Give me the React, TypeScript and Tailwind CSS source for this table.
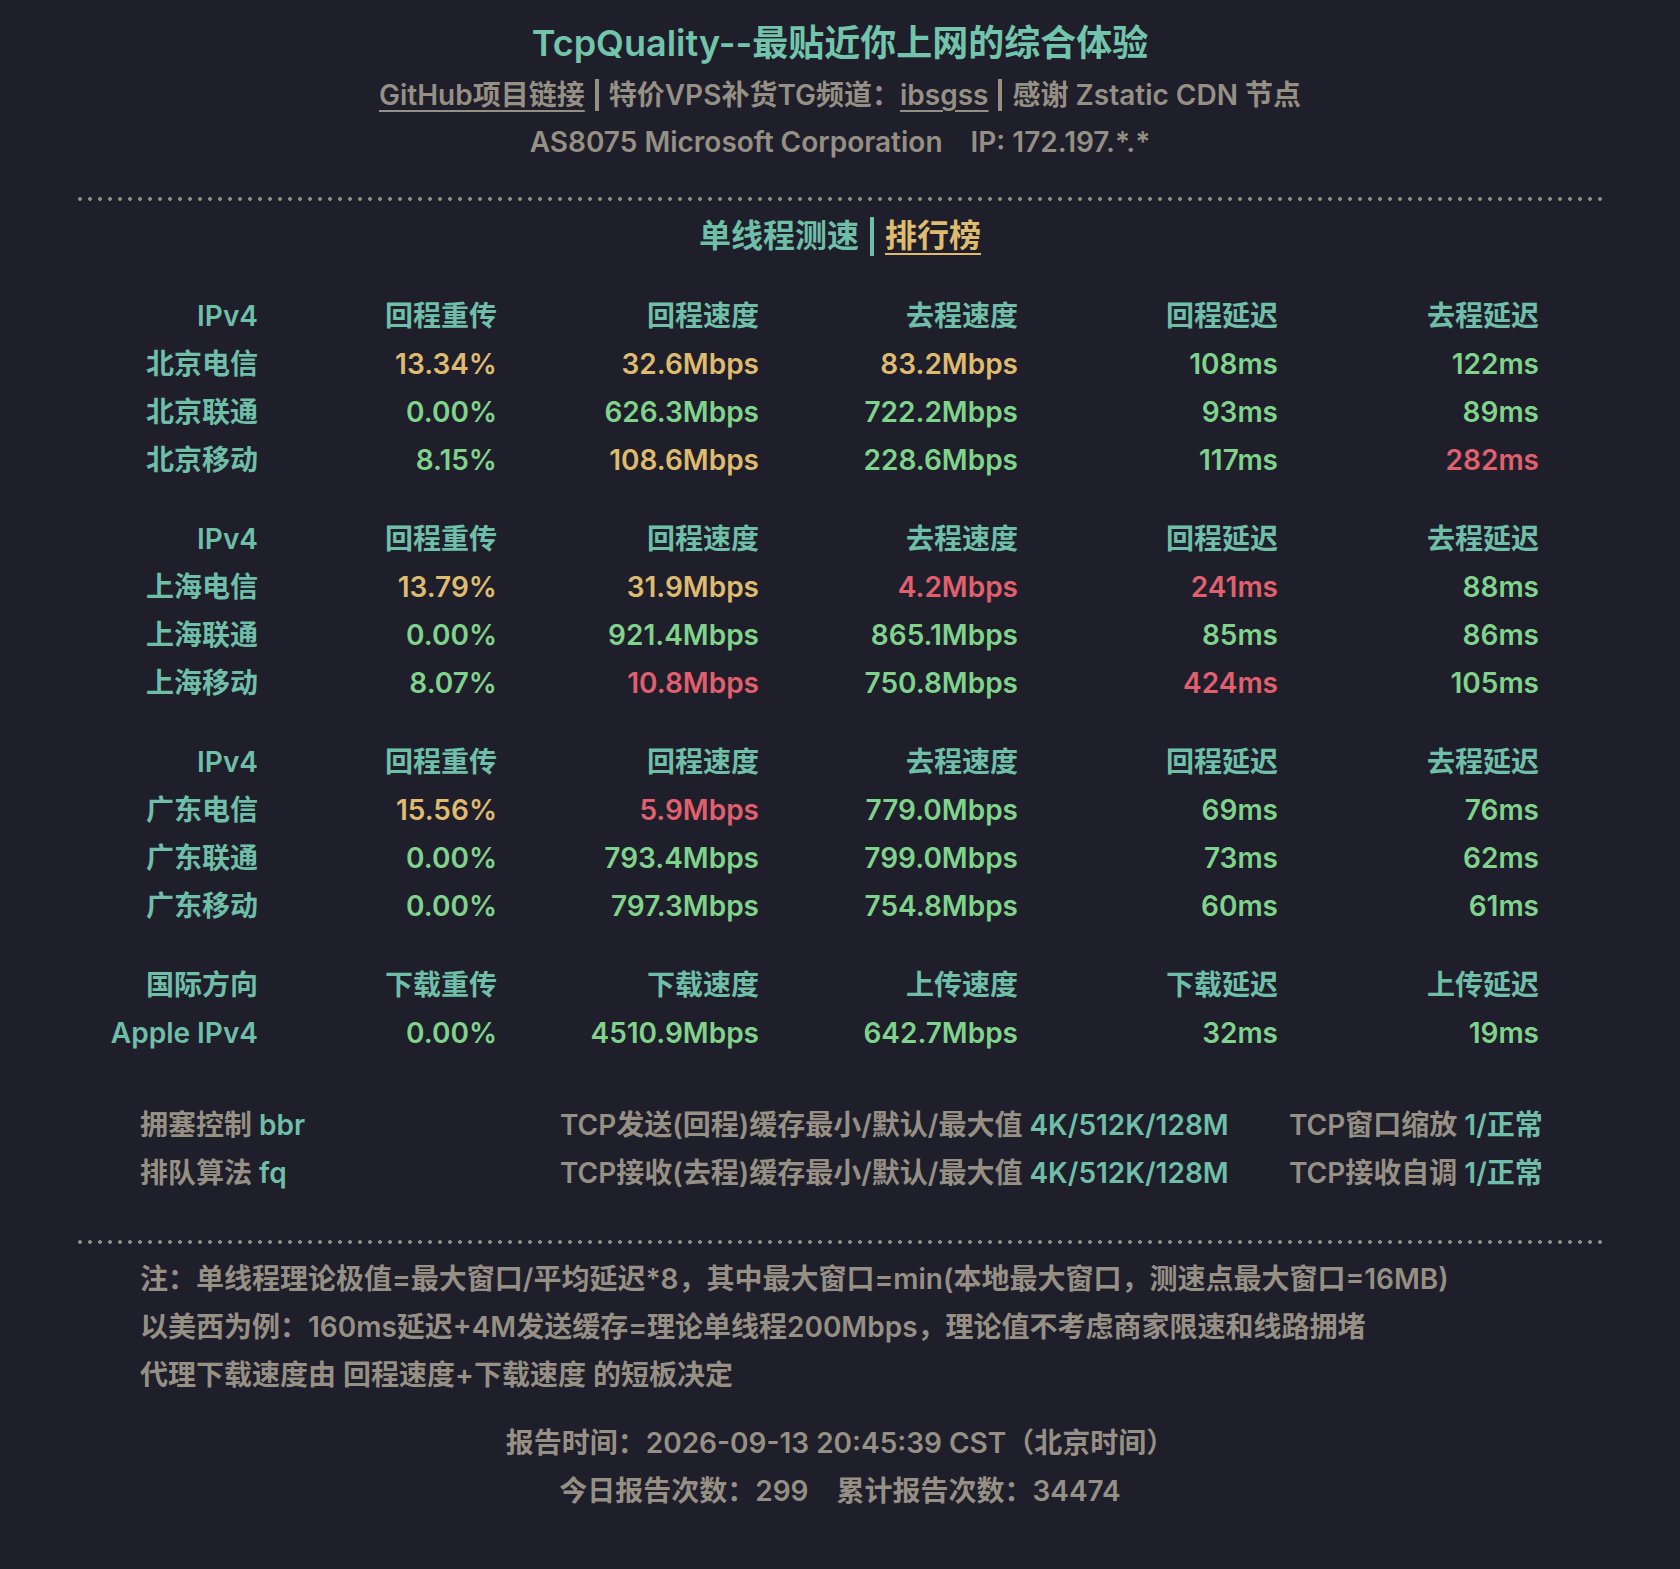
const tone: Record<string, string> = {
  y: "text-[#debb6e]",
  g: "text-[#80d38a]",
  r: "text-[#e0606e]",
};

type Cell = [string, string];
type Group = { head: string[]; rows: [string, ...Cell[]][] };

const groups: Group[] = [
  {
    head: ["IPv4", "回程重传", "回程速度", "去程速度", "回程延迟", "去程延迟"],
    rows: [
      ["北京电信", ["13.34%", "y"], ["32.6Mbps", "y"], ["83.2Mbps", "y"], ["108ms", "g"], ["122ms", "g"]],
      ["北京联通", ["0.00%", "g"], ["626.3Mbps", "g"], ["722.2Mbps", "g"], ["93ms", "g"], ["89ms", "g"]],
      ["北京移动", ["8.15%", "g"], ["108.6Mbps", "y"], ["228.6Mbps", "g"], ["117ms", "g"], ["282ms", "r"]],
    ],
  },
  {
    head: ["IPv4", "回程重传", "回程速度", "去程速度", "回程延迟", "去程延迟"],
    rows: [
      ["上海电信", ["13.79%", "y"], ["31.9Mbps", "y"], ["4.2Mbps", "r"], ["241ms", "r"], ["88ms", "g"]],
      ["上海联通", ["0.00%", "g"], ["921.4Mbps", "g"], ["865.1Mbps", "g"], ["85ms", "g"], ["86ms", "g"]],
      ["上海移动", ["8.07%", "g"], ["10.8Mbps", "r"], ["750.8Mbps", "g"], ["424ms", "r"], ["105ms", "g"]],
    ],
  },
  {
    head: ["IPv4", "回程重传", "回程速度", "去程速度", "回程延迟", "去程延迟"],
    rows: [
      ["广东电信", ["15.56%", "y"], ["5.9Mbps", "r"], ["779.0Mbps", "g"], ["69ms", "g"], ["76ms", "g"]],
      ["广东联通", ["0.00%", "g"], ["793.4Mbps", "g"], ["799.0Mbps", "g"], ["73ms", "g"], ["62ms", "g"]],
      ["广东移动", ["0.00%", "g"], ["797.3Mbps", "g"], ["754.8Mbps", "g"], ["60ms", "g"], ["61ms", "g"]],
    ],
  },
  {
    head: ["国际方向", "下载重传", "下载速度", "上传速度", "下载延迟", "上传延迟"],
    rows: [
      ["Apple IPv4", ["0.00%", "g"], ["4510.9Mbps", "g"], ["642.7Mbps", "g"], ["32ms", "g"], ["19ms", "g"]],
    ],
  },
];

const Dots = ({ className = "" }: { className?: string }) => (
  <div
    className={
      "mx-auto w-[1524px] h-[4px] bg-[radial-gradient(circle_at_2px_2px,#8f8a7e_1.7px,transparent_2.2px)] bg-[length:10px_4px] " +
      className
    }
  />
);

const Bar = ({ className = "" }: { className?: string }) => (
  <span className={"inline-block align-middle w-[4px] " + className} />
);

export default function App() {
  return (
    <div className="min-h-screen bg-[#1f1e2b] font-['Inter','Noto_Sans_CJK_SC',sans-serif] font-semibold text-[28px] text-[#969084] pb-[55px]">
      {/* header */}
      <h1 className="pt-[18px] text-center text-[36px] leading-[50px] font-semibold text-[#72c4aa]">
        TcpQuality--最贴近你上网的综合体验
      </h1>
      <p className="mt-[3px] text-center leading-[48px]">
        <span className="underline decoration-2 underline-offset-[5px]">GitHub项目链接</span>
        <Bar className="mx-[10px] h-[32px] bg-[#969084] -mt-[4px]" />
        特价VPS补货TG频道：
        <span className="underline decoration-2 underline-offset-[5px]">ibsgss</span>
        <Bar className="mx-[10px] h-[32px] bg-[#969084] -mt-[4px]" />
        感谢 Zstatic CDN 节点
      </p>
      <p className="text-center leading-[47px]">
        AS8075 Microsoft Corporation<span className="ml-[28px]">IP: 172.197.*.*</span>
      </p>

      <Dots className="mt-[31px]" />

      <div className="mt-[11px] text-center text-[32px] leading-[48px]">
        <span className="text-[#6fbea7]">单线程测速</span>
        <Bar className="mx-[11px] h-[39px] bg-[#6fbea7] -mt-[4px]" />
        <span className="text-[#debb6e] underline decoration-2 underline-offset-[6px]">排行榜</span>
      </div>

      {/* speed table */}
      <div className="mt-[32px] mx-auto w-[1462px] flex flex-col gap-[31px]">
        {groups.map((g, gi) => (
          <div key={gi} className="grid grid-cols-[181px_239px_262px_259px_260px_261px]">
            {g.head.map((h, i) => (
              <div key={i} className="h-[48px] leading-[48px] pr-8 text-right text-[#6fbea7] whitespace-nowrap">
                {h}
              </div>
            ))}
            {g.rows.map(([name, ...cells], ri) => (
              <div key={ri} className="contents">
                <div className="h-[48px] leading-[48px] pr-8 text-right text-[#6fbea7] whitespace-nowrap">{name}</div>
                {cells.map(([v, c], ci) => (
                  <div key={ci} className={"h-[48px] leading-[48px] pr-8 text-right whitespace-nowrap " + tone[c]}>
                    {v}
                  </div>
                ))}
              </div>
            ))}
          </div>
        ))}
      </div>

      {/* tcp params */}
      <div className="mt-[44px] mx-auto w-[1400px] grid grid-cols-[420px_729px_1fr] leading-[48px] whitespace-nowrap">
        <div>
          拥塞控制 <span className="text-[#6fbea7]">bbr</span>
        </div>
        <div>
          TCP发送(回程)缓存最小/默认/最大值 <span className="text-[#6fbea7]">4K/512K/128M</span>
        </div>
        <div>
          TCP窗口缩放 <span className="text-[#6fbea7]">1/正常</span>
        </div>
        <div>
          排队算法 <span className="text-[#6fbea7]">fq</span>
        </div>
        <div>
          TCP接收(去程)缓存最小/默认/最大值 <span className="text-[#6fbea7]">4K/512K/128M</span>
        </div>
        <div>
          TCP接收自调 <span className="text-[#6fbea7]">1/正常</span>
        </div>
      </div>

      <Dots className="mt-[43px]" />

      {/* notes */}
      <div className="mt-[11px] mx-auto w-[1400px] leading-[48px]">
        <p>注：单线程理论极值=最大窗口/平均延迟*8，其中最大窗口=min(本地最大窗口，测速点最大窗口=16MB)</p>
        <p>以美西为例：160ms延迟+4M发送缓存=理论单线程200Mbps，理论值不考虑商家限速和线路拥堵</p>
        <p>代理下载速度由 回程速度+下载速度 的短板决定</p>
      </div>

      <div className="mt-[20px] text-center leading-[48px]">
        <p>报告时间：2026-09-13 20:45:39 CST（北京时间）</p>
        <p>
          今日报告次数：299<span className="ml-[28px]">累计报告次数：34474</span>
        </p>
      </div>
    </div>
  );
}
